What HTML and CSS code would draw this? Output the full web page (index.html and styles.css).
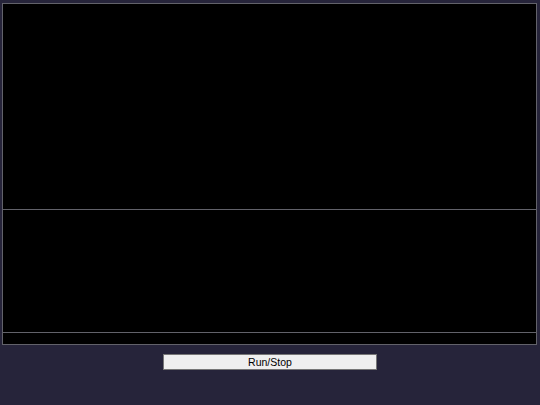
FILE: index.html
```html
<!DOCTYPE html>
<html>
<head>
<meta charset="utf-8">
<link rel="stylesheet" href="styles.css">
</head>
<body>
<div class="app">
  <div class="panel panel-top"></div>
  <div class="panel panel-mid"></div>
  <div class="panel panel-bar"></div>
  <div class="controls">
    <button class="btn">Run/Stop</button>
  </div>
</div>
</body>
</html>
```
FILE: styles.css
```css
html, body {
  margin: 0;
  padding: 0;
  background: #26243a;
  height: 100%;
}
.app {
  display: flex;
  flex-direction: column;
  padding: 3px 3px 0 2px;
}
.panel {
  background: #000;
  border: 1px solid #62626a;
  box-sizing: border-box;
}
.panel-top {
  height: 207px;
}
.panel-mid {
  height: 124px;
  margin-top: -1px;
}
.panel-bar {
  height: 13px;
  margin-top: -1px;
}
.controls {
  display: flex;
  justify-content: center;
  padding-top: 9px;
  padding-left: 1px;
}
.btn {
  width: 214px;
  height: 16px;
  padding: 0;
  background: #efefef;
  border: 1px solid #767676;
  font-family: "Liberation Sans", Arial, sans-serif;
  font-size: 10.5px;
  line-height: 14px;
  color: #000;
}
```
